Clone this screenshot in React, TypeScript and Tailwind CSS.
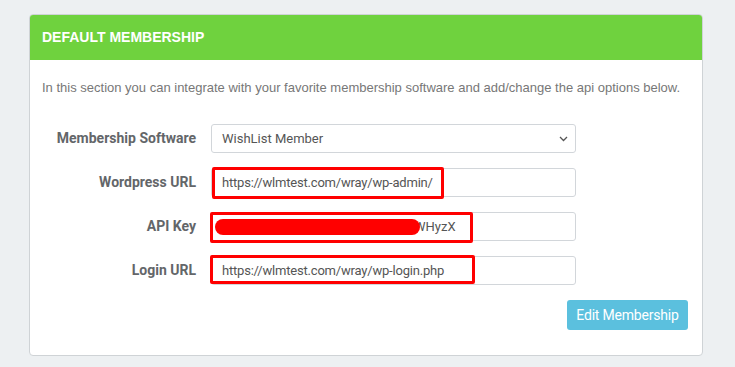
import React from "react";

type Mark = { left: number; top: number; width: number; height: number };

function Field({
  label,
  value,
  mark,
  blot,
}: {
  label: string;
  value: string;
  mark?: Mark;
  blot?: boolean;
}) {
  return (
    <div className="flex items-center gap-[15px]">
      <label className="w-[154px] text-right text-[14px] font-bold text-[#636669] font-['Roboto',sans-serif]">
        {label}
      </label>
      <div className="relative w-[365px] h-[29px]">
        <div
          className={`h-full w-full rounded-[3px] border border-[#d2d6da] bg-white flex items-center text-[13px] text-[#555] font-['Roboto',sans-serif] ${
            blot ? "pl-[202px]" : "pl-[10px] tracking-[-0.2px]"
          }`}
        >
          {value}
        </div>
        {blot && (
          <div className="absolute left-[4px] top-[7px] w-[205px] h-[16px] rounded-full bg-[#ff0000]" />
        )}
        {mark && (
          <div
            className="absolute border-[3px] border-[#ff0000] rounded-[2px]"
            style={{ left: mark.left, top: mark.top, width: mark.width, height: mark.height }}
          />
        )}
      </div>
    </div>
  );
}

export default function App() {
  return (
    <div className="w-[735px] h-[367px] bg-[#edf0f2] pt-[14px] pl-[29px] font-['Liberation_Sans',Arial,sans-serif]">
      <div className="w-[674px] h-[342px] rounded-[4px] border border-[#cfd3d6] bg-white overflow-hidden">
        <div className="h-[45px] bg-[#6fd23e] pl-[12px] flex items-center">
          <h2 className="text-[14px] font-bold text-white">DEFAULT MEMBERSHIP</h2>
        </div>
        <div className="px-[12px] pt-[19px]">
          <p className="text-[13px] leading-[18px] text-[#777]">
            In this section you can integrate with your favorite membership software and add/change the api options below.
          </p>
          <div className="mt-[27px] flex flex-col gap-[15px]">
            <div className="flex items-center gap-[15px]">
              <label className="w-[154px] text-right text-[14px] font-bold text-[#636669] font-['Roboto',sans-serif]">
                Membership Software
              </label>
              <div className="relative w-[365px] h-[29px] rounded-[3px] border border-[#d2d6da] bg-white pl-[10px] flex items-center text-[13px] text-[#555] font-['Roboto',sans-serif]">
                WishList Member
                <svg
                  className="absolute right-[7px] top-[11px]"
                  width="9"
                  height="6"
                  viewBox="0 0 9 6"
                  fill="none"
                  stroke="#555"
                  strokeWidth="1.3"
                >
                  <path d="M1 1l3.5 3.5L8 1" />
                </svg>
              </div>
            </div>
            <Field
              label="Wordpress URL"
              value="https://wlmtest.com/wray/wp-admin/"
              mark={{ left: 1, top: -1, width: 232, height: 32 }}
            />
            <Field
              label="API Key"
              value="WHyzX"
              blot
              mark={{ left: -1, top: 0, width: 263, height: 31 }}
            />
            <Field
              label="Login URL"
              value="https://wlmtest.com/wray/wp-login.php"
              mark={{ left: -1, top: -1, width: 265, height: 29 }}
            />
          </div>
          <div className="mt-[15px] flex justify-end pr-[2px]">
            <button className="h-[30px] w-[121px] rounded-[3px] bg-[#5bc0de] text-white text-[14px] tracking-[-0.2px] font-['Roboto',sans-serif]">
              Edit Membership
            </button>
          </div>
        </div>
      </div>
    </div>
  );
}
